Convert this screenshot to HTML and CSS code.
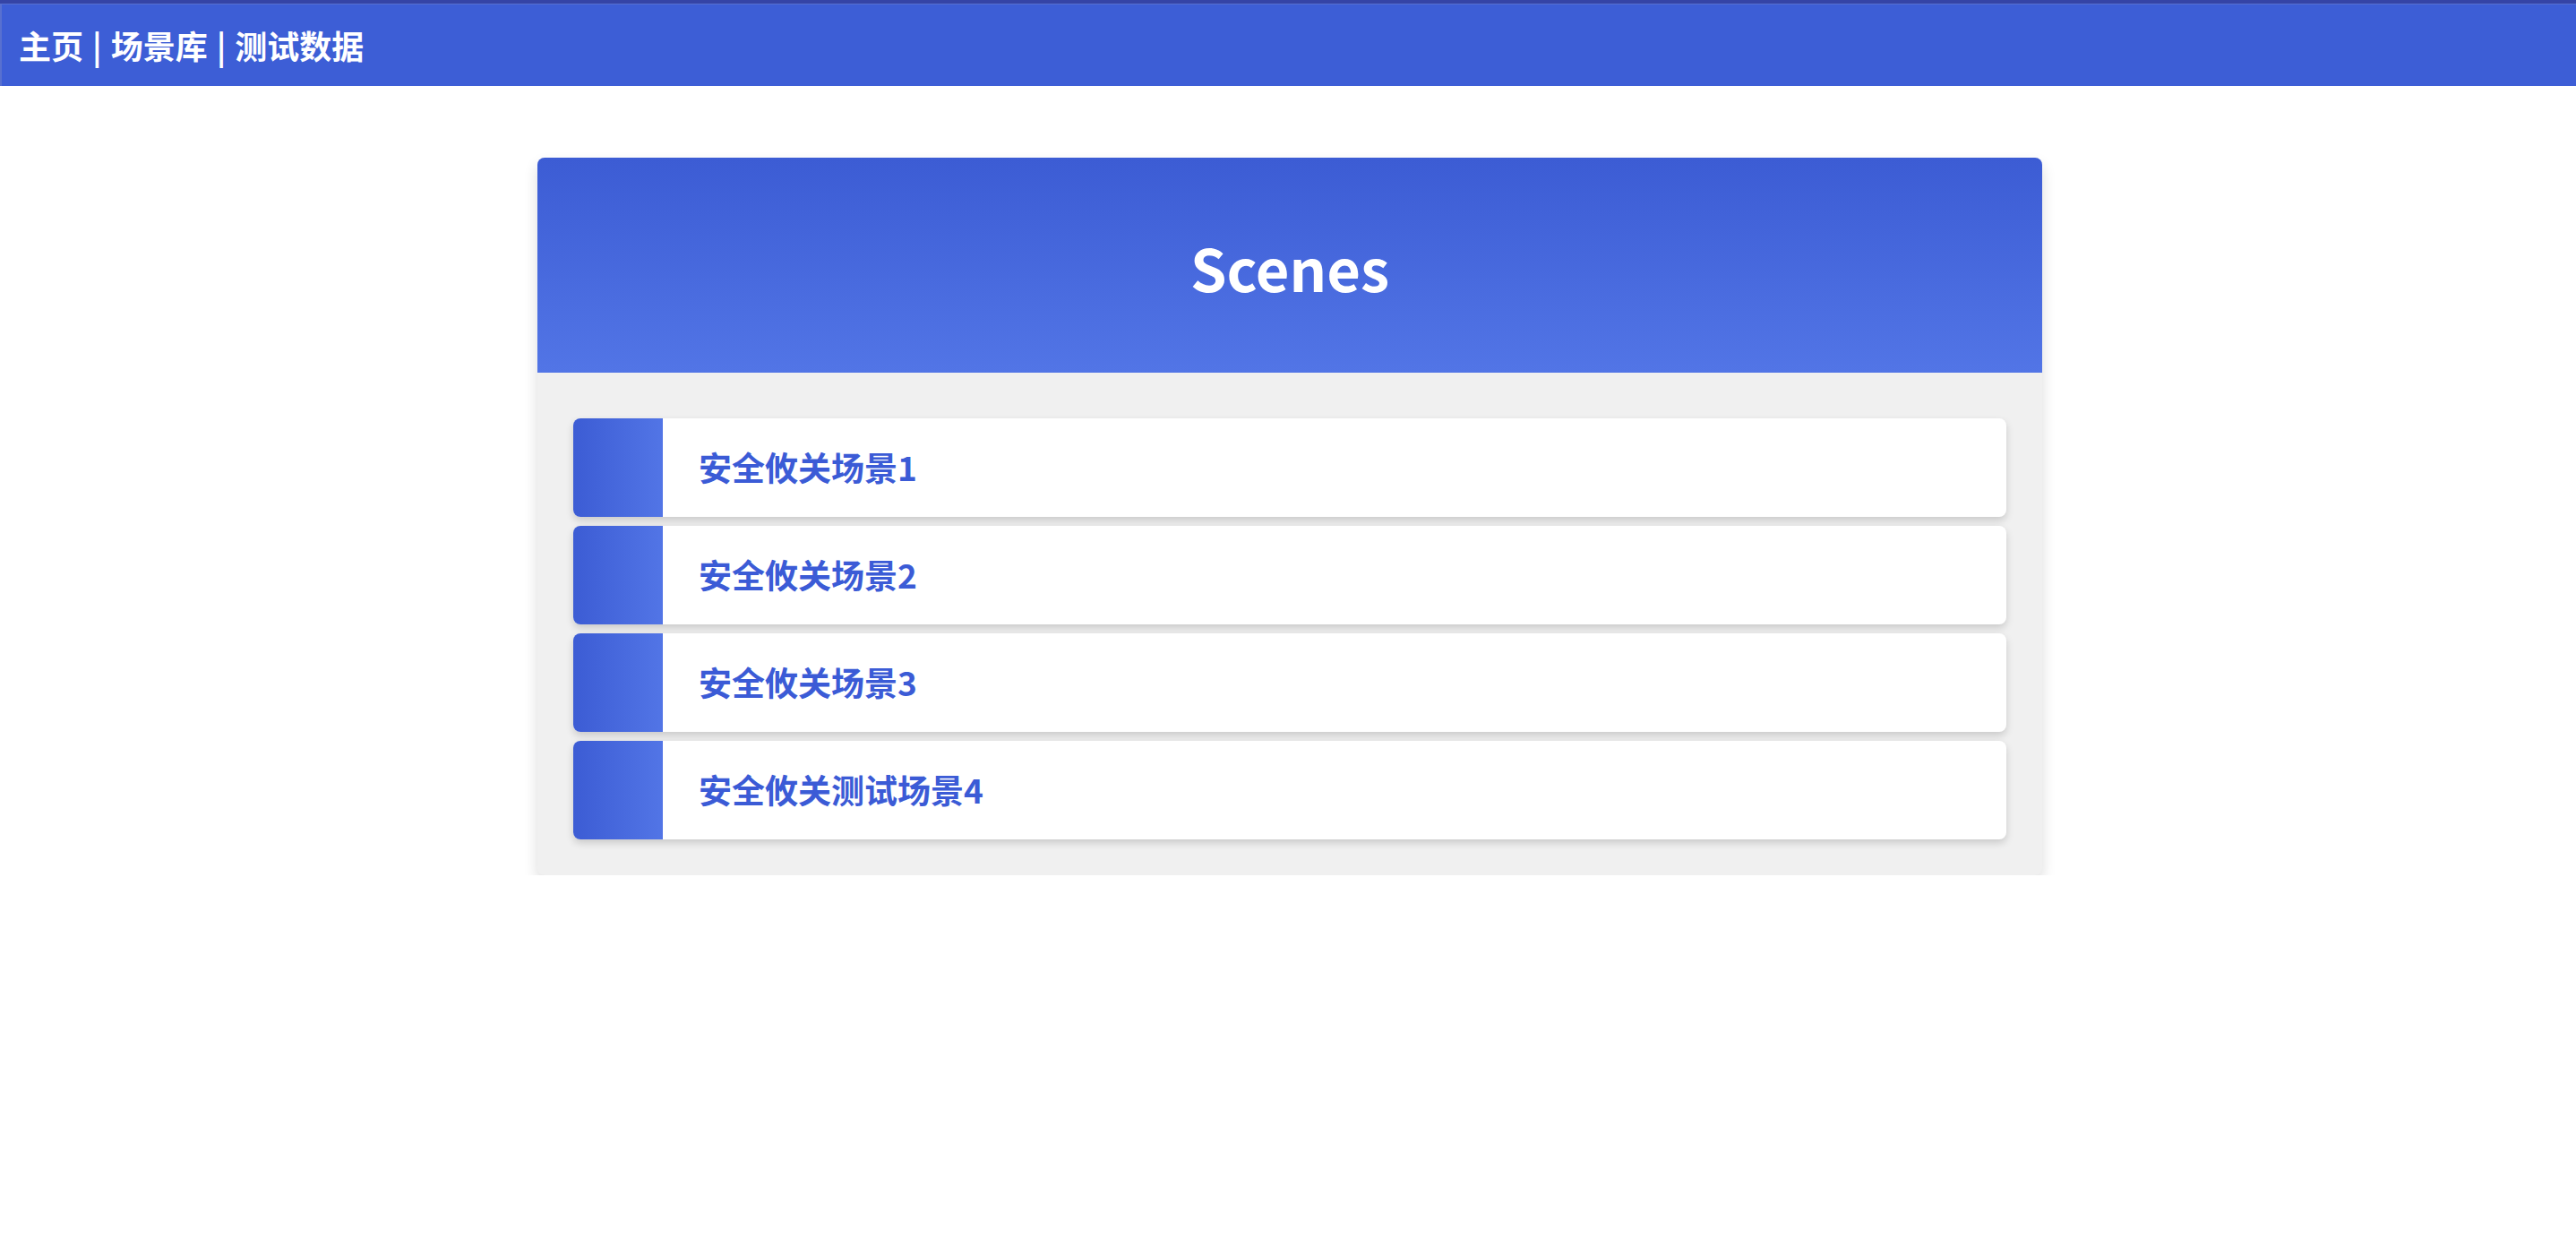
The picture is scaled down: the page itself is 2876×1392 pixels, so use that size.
FILE: index.html
```html
<!DOCTYPE html>
<html lang="zh">
<head>
<meta charset="utf-8">
<title>Scenes</title>
<link rel="stylesheet" href="styles.css">
</head>
<body>
<nav class="topnav">
  <a class="nav-link" href="#">主页</a>
  <span class="sep">|</span>
  <a class="nav-link" href="#">场景库</a>
  <span class="sep">|</span>
  <a class="nav-link" href="#">测试数据</a>
</nav>
<main class="page">
  <section class="card">
    <header class="card-header">
      <h1 class="card-title">Scenes</h1>
    </header>
    <div class="card-body">
      <a class="scene" href="#"><span class="scene-mark"></span><span class="scene-name">安全攸关场景1</span></a>
      <a class="scene" href="#"><span class="scene-mark"></span><span class="scene-name">安全攸关场景2</span></a>
      <a class="scene" href="#"><span class="scene-mark"></span><span class="scene-name">安全攸关场景3</span></a>
      <a class="scene" href="#"><span class="scene-mark"></span><span class="scene-name">安全攸关测试场景4</span></a>
    </div>
  </section>
</main>
</body>
</html>
```

FILE: styles.css
```css
* { box-sizing: border-box; }

html, body {
  margin: 0;
  padding: 0;
  background: #ffffff;
  font-family: "Noto Sans CJK SC", "Noto Sans", sans-serif;
}

.topnav {
  height: 96px;
  background: #3d5ed6;
  border-top: 4px solid #3544a6;
  box-shadow: inset 2px 1px 0 #5870d0;
  display: flex;
  align-items: center;
  padding: 0 0 0 21px;
  gap: 10px;
  color: #ffffff;
  font-size: 36px;
  font-weight: 700;
}

.nav-link {
  color: #ffffff;
  text-decoration: none;
}

.sep {
  color: #ffffff;
}

.page {
  padding-top: 80px;
  padding-left: 4px;
  display: flex;
  justify-content: center;
}

.card {
  width: 1680px;
  border-radius: 8px;
  background: #f0f0f0;
  box-shadow: 0 8px 16px rgba(0, 0, 0, 0.14);
  overflow: hidden;
}

.card-header {
  height: 240px;
  background: linear-gradient(to bottom, #3c5cd4, #5275e6);
  display: flex;
  align-items: center;
  justify-content: center;
}

.card-title {
  margin: 0;
  color: #ffffff;
  font-size: 65px;
  font-weight: 700;
  line-height: 1;
  padding-top: 4px;
}

.card-body {
  padding: 51px 40px 40px;
  display: flex;
  flex-direction: column;
  gap: 10px;
}

.scene {
  display: flex;
  align-items: center;
  height: 110px;
  background: #ffffff;
  border-radius: 8px;
  box-shadow: 0 4px 8px rgba(0, 0, 0, 0.16);
  text-decoration: none;
  overflow: hidden;
}

.scene-mark {
  width: 100px;
  align-self: stretch;
  background: linear-gradient(to right, #3c5cd4, #5275e6);
}

.scene-name {
  margin-left: 40px;
  color: #3b5bd6;
  font-size: 37px;
  font-weight: 700;
  padding-bottom: 2px;
}
```
